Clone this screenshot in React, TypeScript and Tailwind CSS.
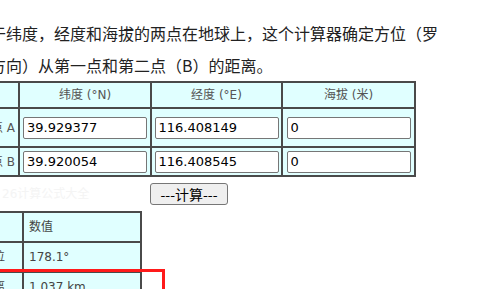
import React from 'react';

const latin = '"DejaVu Sans", "Noto Sans CJK SC", sans-serif';

export default function App() {
  return (
    <div className="relative w-[485px] h-[289px] overflow-hidden bg-white text-[#333]" style={{ fontFamily: latin }}>
      <div className="ml-[-26px] w-[470px] pt-[17px]">
        {/* intro */}
        <p className="text-[16px] leading-[32px] text-[#222] [text-spacing-trim:space-all]" style={{ fontFamily: '"Noto Sans CJK SC", sans-serif' }}>
          对于纬度，经度和海拔的两点在地球上，这个计算器确定方位（罗盘方向）从第一点和第二点（B）的距离。
        </p>

        {/* input table */}
        <table className="table-fixed border-collapse border-2 border-[#4a4a4a] w-[442px] text-[12px]">
          <colgroup>
            <col className="w-[44px]" />
            <col className="w-[132px]" />
            <col className="w-[131px]" />
            <col className="w-[133px]" />
          </colgroup>
          <thead>
            <tr className="h-[26px] bg-[#e0ffff]">
              <th className="border-2 border-[#4a4a4a] font-normal text-[#555]"></th>
              <th className="border-2 border-[#4a4a4a] font-normal text-[#555]">纬度 (°N)</th>
              <th className="border-2 border-[#4a4a4a] font-normal text-[#555]">经度 (°E)</th>
              <th className="border-2 border-[#4a4a4a] font-normal text-[#555]">海拔 (米)</th>
            </tr>
          </thead>
          <tbody>
            {[
              { label: '起点 A', lat: '39.929377', lng: '116.408149', h: 'h-[39px]' },
              { label: '终点 B', lat: '39.920054', lng: '116.408545', h: 'h-[29px]' },
            ].map((r) => (
              <tr key={r.label} className={`${r.h} bg-[#e0ffff]`}>
                <td className="border-2 border-[#4a4a4a] text-center text-[#555] whitespace-nowrap">{r.label}</td>
                <td className="border-2 border-[#4a4a4a] px-[2px]">
                  <input defaultValue={r.lat} className="block mx-auto w-[124px] h-[22px] bg-white border border-[#767676] rounded-[2px] px-[3px] text-[13px] text-black outline-none" />
                </td>
                <td className="border-2 border-[#4a4a4a] px-[2px]">
                  <input defaultValue={r.lng} className="block mx-auto w-[124px] h-[22px] bg-white border border-[#767676] rounded-[2px] px-[3px] text-[13px] text-black outline-none" />
                </td>
                <td className="border-2 border-[#4a4a4a] px-[2px]">
                  <input defaultValue="0" className="block mx-auto w-[124px] h-[22px] bg-white border border-[#767676] rounded-[2px] px-[3px] text-[13px] text-black outline-none" />
                </td>
              </tr>
            ))}
          </tbody>
        </table>

        {/* watermark + button */}
        <div className="flex items-center h-[34px]">
          <span className="ml-[28px] w-[148px] text-[12px] text-[#f4f4f4] whitespace-nowrap">26计算公式大全</span>
          <button className="w-[78px] h-[22px] bg-[#efefef] border border-[#767676] rounded-[3px] text-[14px] text-black" style={{ fontFamily: '"Noto Sans CJK SC", sans-serif' }}>
            ---计算---
          </button>
        </div>

        {/* result table */}
        <table className="table-fixed border-collapse border-2 border-[#4a4a4a] w-[168px] text-[12px]">
          <colgroup>
            <col className="w-[48px]" />
            <col className="w-[118px]" />
          </colgroup>
          <tbody>
            <tr className="h-[30px] bg-[#e0ffff]">
              <td className="border-2 border-[#4a4a4a] px-[5px] text-[#444]"></td>
              <td className="border-2 border-[#4a4a4a] px-[5px] text-[#444]">数值</td>
            </tr>
            <tr className="h-[30px] bg-[#e0ffff]">
              <td className="border-2 border-[#4a4a4a] px-[5px] text-[#444]">方位</td>
              <td className="border-2 border-[#4a4a4a] px-[5px] text-[#444]">178.1°</td>
            </tr>
            <tr className="h-[30px] bg-[#e0ffff]">
              <td className="border-2 border-[#4a4a4a] px-[5px] text-[#444]">距离</td>
              <td className="border-2 border-[#4a4a4a] px-[5px] text-[#444]">1.037 km</td>
            </tr>
          </tbody>
        </table>
      </div>

      {/* highlight annotation */}
      <div className="absolute left-[-10px] top-[269px] w-[175px] h-[60px] border-[3px] border-[#ff1a1a]" />
    </div>
  );
}
